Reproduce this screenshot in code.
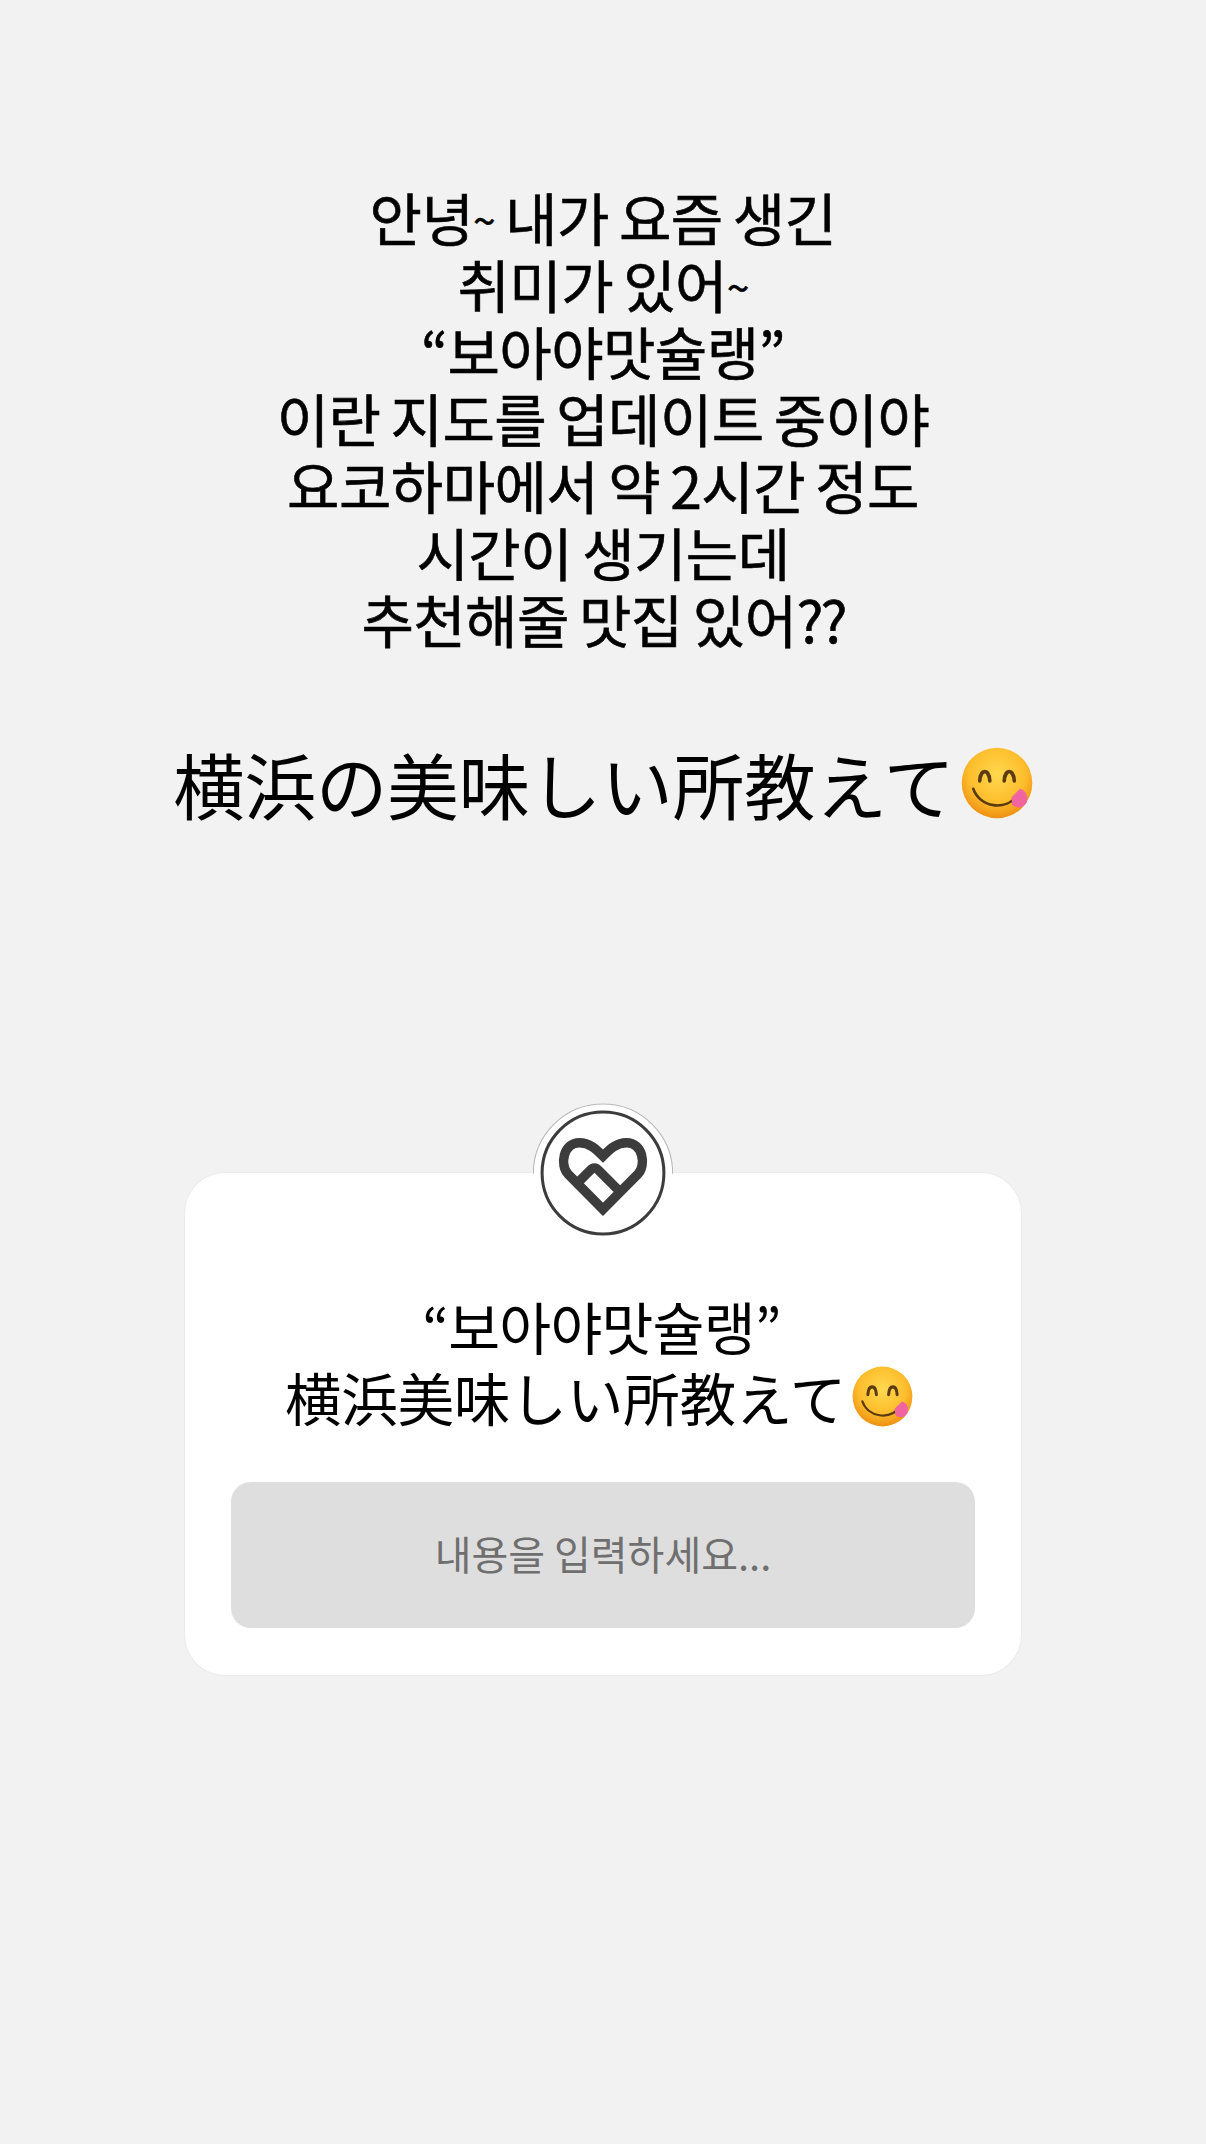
<template>
  <div class="page">
    <div class="intro">
      <div>안녕<span class="tilde">~</span> 내가 요즘 생긴</div>
      <div>취미가 있어<span class="tilde">~</span></div>
      <div>“보아야맛슐랭”</div>
      <div>이란 지도를 업데이트 중이야</div>
      <div>요코하마에서 약 2시간 정도</div>
      <div>시간이 생기는데</div>
      <div>추천해줄 맛집 있어<span class="marks">??</span></div>
    </div>

    <div class="headline">
      <span>横浜の美味しい所教えて</span>
      <svg class="emoji big" viewBox="0 0 100 100">
        <defs>
          <radialGradient id="yumFace" cx="50%" cy="38%" r="62%">
            <stop offset="0" stop-color="#ffd84f" />
            <stop offset="0.65" stop-color="#fdbd2c" />
            <stop offset="1" stop-color="#ee8f12" />
          </radialGradient>
        </defs>
        <g id="yum">
          <circle cx="50" cy="50" r="49" fill="url(#yumFace)" />
          <path d="M26 47C27 30 39 30 40 47M60 47C61 30 73 30 74 47" fill="none" stroke="#5c3a12" stroke-width="5" stroke-linecap="round" />
          <path d="M17 58C26 84 62 90 80 66" fill="none" stroke="#5c3a12" stroke-width="3.6" stroke-linecap="round" />
          <path d="M70 70L82 58C90 60 94 69 91 77C87 85 76 86 71 80Z" fill="#f0649f" />
        </g>
      </svg>
    </div>

    <div class="card">
      <svg class="badge" viewBox="100 68 416 416">
        <circle cx="308" cy="276" r="207" fill="#fff" />
        <path class="ring" d="M101 278A207 207 0 0 1 515 278" />
        <circle class="inner" cx="308" cy="276" r="181" />
        <path class="heart" d="M308 384L205 280C178 253 190 186 238 186C270 186 290 208 308 226C326 208 346 186 378 186C426 186 438 253 411 280ZM240 298L270 268C278 259 287 259 295 268L352 325" />
      </svg>

      <div class="title">
        <div class="title-kr">“보아야맛슐랭”</div>
        <div class="title-jp">
          <span>横浜美味しい所教えて</span>
          <svg class="emoji small" viewBox="0 0 100 100"><use href="#yum" /></svg>
        </div>
      </div>

      <div class="answer">내용을 입력하세요...</div>
    </div>
  </div>
</template>

<style>
html,
body {
  margin: 0;
  background: #f2f2f2;
}
</style>

<style scoped>
.page {
  box-sizing: border-box;
  height: 2144px;
  padding-top: 183px;
  background: #f2f2f2;
  color: #000;
  font-family: "Noto Sans CJK KR", "Noto Sans", sans-serif;
  overflow: hidden;
}

.intro {
  font-size: 57px;
  line-height: 67px;
  letter-spacing: -0.6px;
  word-spacing: -2px;
  text-align: center;
  -webkit-text-stroke: 0.6px #000;
}

.tilde {
  font-size: 40px;
  line-height: 0;
  vertical-align: 5px;
}

.marks {
  letter-spacing: -3px;
}

.headline {
  display: flex;
  justify-content: center;
  align-items: center;
  gap: 6px;
  margin-top: 86px;
  height: 90px;
  font-family: "Noto Sans CJK JP", sans-serif;
  font-size: 71.4px;
}

.emoji {
  flex: none;
}

.emoji.big {
  width: 72px;
  height: 72px;
}

.emoji.small {
  width: 61px;
  height: 61px;
}

.card {
  position: relative;
  box-sizing: border-box;
  width: 836px;
  height: 502px;
  margin: 345px auto 0;
  padding: 117px 46px 47px;
  background: #fff;
  border-radius: 40px;
  box-shadow: 0 0 0 1px #ebebeb;
}

.badge {
  position: absolute;
  top: -70px;
  left: 348px;
  width: 140px;
  height: 140px;
}

.ring {
  fill: none;
  stroke: #b5b5b5;
  stroke-width: 3;
}

.inner {
  fill: #fff;
  stroke: #3c3c3c;
  stroke-width: 9;
}

.heart {
  fill: none;
  stroke: #3c3c3c;
  stroke-width: 28;
  stroke-linejoin: miter;
}

.title {
  font-size: 56.4px;
  line-height: 71px;
  text-align: center;
}

.title-kr {
  padding-right: 3px;
  letter-spacing: -0.8px;
}

.title-jp {
  display: flex;
  justify-content: center;
  align-items: center;
  gap: 6px;
  padding-right: 8px;
  font-family: "Noto Sans CJK JP", sans-serif;
}

.answer {
  display: flex;
  justify-content: center;
  align-items: center;
  box-sizing: border-box;
  height: 146px;
  margin-top: 50px;
  padding-bottom: 4px;
  background: #dedede;
  border-radius: 20px;
  color: #6f6f6f;
  font-size: 40px;
}
</style>
